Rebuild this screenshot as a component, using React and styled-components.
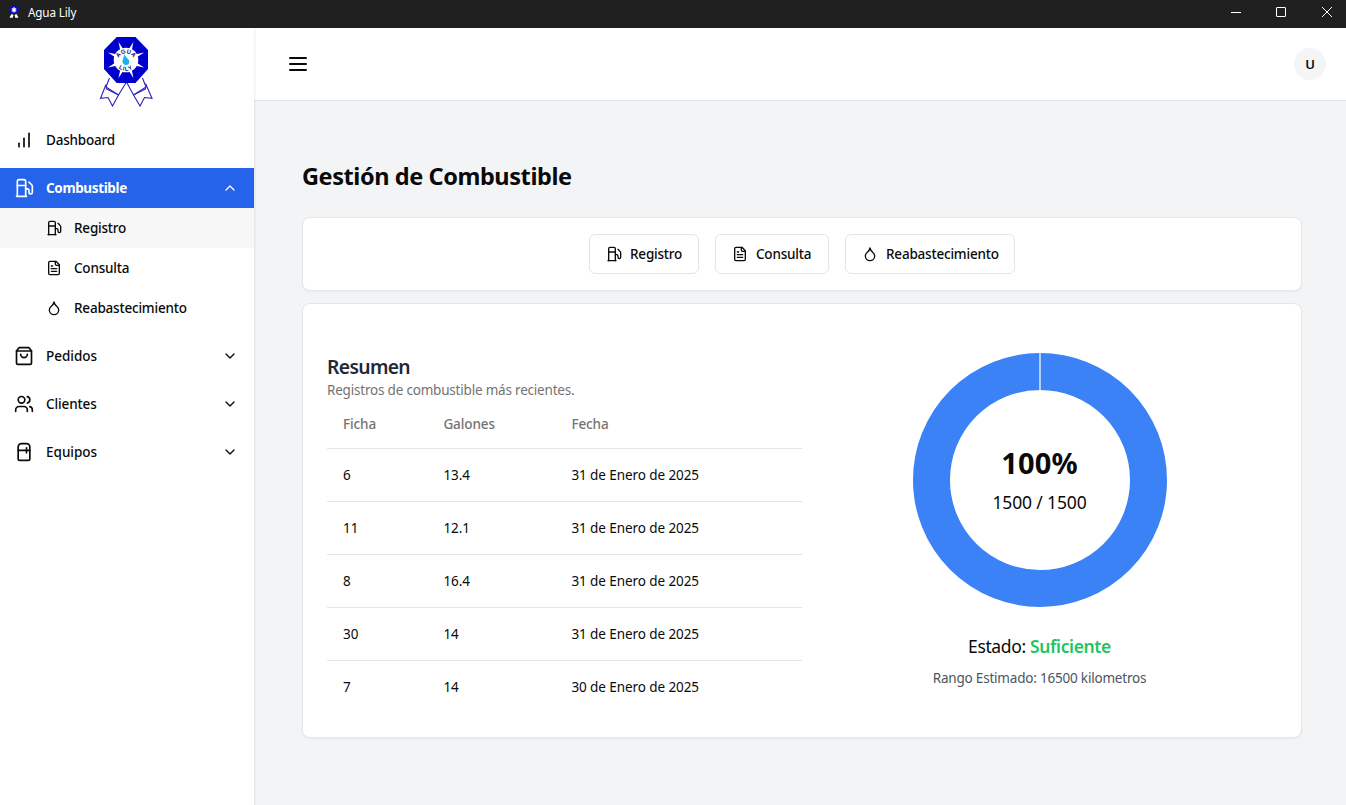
import React from "react";
import styled, { createGlobalStyle, css } from "styled-components";

const Global = createGlobalStyle`
  *, *::before, *::after { box-sizing: border-box; }
  html, body { margin: 0; padding: 0; }
  body {
    font-family: "Segoe UI", "Noto Sans", "Open Sans", sans-serif;
    font-size: 13.5px;
    line-height: 20px;
    color: #0a0a0a;
    background: #f3f4f6;
    overflow: hidden;
  }
  h1, h2, p { margin: 0; }
  button { font: inherit; color: inherit; cursor: pointer; }
`;

const Window = styled.div`
  display: flex;
  flex-direction: column;
  width: 100%;
  height: 100vh;
`;

const TitleBar = styled.header`
  flex: none;
  display: flex;
  align-items: center;
  height: 28px;
  padding-left: 8px;
  background: #202020;
  color: #fff;
`;

const AppName = styled.span`
  margin: -4px auto 0 8px;
  font-size: 11.7px;
  letter-spacing: -0.15px;
`;

const WindowButton = styled.button`
  display: grid;
  place-items: center;
  width: ${(p) => p.$w}px;
  height: 28px;
  padding: 0 0 4px;
  border: 0;
  background: transparent;
  svg { display: block; }
`;

const Body = styled.div`
  flex: 1;
  display: flex;
  min-height: 0;
`;

const Sidebar = styled.aside`
  flex: none;
  width: 254px;
  background: #fff;
  box-shadow: 0 1px 3px rgba(0, 0, 0, 0.14);
  z-index: 1;
`;

const Brand = styled.div`
  display: flex;
  justify-content: center;
  height: 92px;
  padding: 8px 3px 0 0;
`;

const Nav = styled.nav`
  display: flex;
  flex-direction: column;
  gap: 8px;
`;

const NavItem = styled.a`
  display: flex;
  align-items: center;
  height: 40px;
  padding: 0 16px 0 14px;
  gap: 12px;
  font-weight: ${(p) => (p.$active ? 700 : 500)};
  letter-spacing: ${(p) => p.$track || 0}px;
  ${(p) => p.$active && css`
    background: #2563eb;
    color: #fff;
  `}
  svg { flex: none; }
  span { flex: 1; }
`;

const SubItem = styled.a`
  display: flex;
  align-items: center;
  height: 40px;
  padding-left: 46px;
  gap: 12px;
  font-weight: 500;
  letter-spacing: -0.2px;
  background: ${(p) => (p.$current ? "#f7f7f7" : "transparent")};
`;

const Content = styled.div`
  flex: 1;
  display: flex;
  flex-direction: column;
  min-width: 0;
`;

const TopBar = styled.div`
  flex: none;
  display: flex;
  align-items: center;
  justify-content: space-between;
  height: 73px;
  padding: 0 20px 0 32px;
  background: #fff;
  border-bottom: 1px solid #e2e4e8;
`;

const MenuButton = styled.button`
  display: flex;
  padding: 0;
  border: 0;
  background: none;
`;

const Avatar = styled.div`
  display: grid;
  place-items: center;
  width: 32px;
  height: 32px;
  border-radius: 50%;
  background: #f5f5f5;
  font-weight: 600;
  font-size: 13px;
`;

const Main = styled.main`
  flex: 1;
  display: flex;
  flex-direction: column;
  padding: 59px 44px 0 48px;
`;

const PageTitle = styled.h1`
  height: 57px;
  font-size: 23.5px;
  line-height: 32px;
  font-weight: 700;
  letter-spacing: -0.42px;
`;

const Card = styled.section`
  width: 1000px;
  border: 1px solid #e5e7eb;
  border-radius: 8px;
  background: #fff;
  box-shadow: 0 1px 2px rgba(0, 0, 0, 0.05);
`;

const Actions = styled(Card)`
  display: flex;
  align-items: center;
  justify-content: center;
  gap: 16px;
  height: 74px;
  margin-bottom: 12px;
`;

const ActionButton = styled.button`
  display: flex;
  align-items: center;
  gap: 8px;
  width: ${(p) => p.$w}px;
  height: 40px;
  padding: 0 0 0 16px;
  border: 1px solid #e5e5e5;
  border-radius: 6px;
  background: #fff;
  font-weight: 500;
  letter-spacing: -0.2px;
  white-space: nowrap;
`;

const Overview = styled(Card)`
  display: grid;
  grid-template-columns: 1fr 1fr;
  height: 435px;
  padding: 48px 24px 0;
`;

const SummaryTitle = styled.h2`
  padding-top: 1px;
  font-size: 19.3px;
  line-height: 28px;
  font-weight: 600;
  letter-spacing: -0.65px;
  color: #1f2937;
`;

const SummaryNote = styled.p`
  margin-bottom: 2px;
  padding-top: 1px;
  line-height: 16px;
  letter-spacing: -0.2px;
  color: #737373;
`;

const Table = styled.table`
  width: 475px;
  border-collapse: collapse;
  table-layout: fixed;
`;

const HeadCell = styled.th`
  width: ${(p) => p.$w};
  height: 48px;
  padding: 0 16px;
  text-align: left;
  font-weight: 500;
  letter-spacing: -0.1px;
  color: #737373;
  border-bottom: 1px solid #e5e5e5;
`;

const Cell = styled.td`
  height: 53px;
  padding: 0 16px;
  letter-spacing: -0.08px;
  border-bottom: 1px solid #e5e5e5;
  tr:last-child & { border-bottom: 0; }
`;

const Level = styled.div`
  display: flex;
  flex-direction: column;
  align-items: center;
`;

const Gauge = styled.div`
  display: grid;
  place-items: center;
  width: 256px;
  height: 256px;
  > * { grid-area: 1 / 1; }
`;

const GaugeLabel = styled.div`
  display: flex;
  flex-direction: column;
  align-items: center;
  gap: 7px;
`;

const Percent = styled.strong`
  font-size: 29px;
  line-height: 36px;
  font-weight: 700;
  letter-spacing: 0.1px;
`;

const Amount = styled.span`
  font-size: 17.5px;
  line-height: 28px;
  font-weight: 400;
  letter-spacing: -0.15px;
`;

const Status = styled.p`
  margin-top: 24px;
  font-size: 17.5px;
  line-height: 28px;
  letter-spacing: -0.37px;
  b { font-weight: 600; color: #22c55e; }
`;

const Range = styled.p`
  margin-top: 8px;
  letter-spacing: -0.2px;
  color: #4b5563;
`;

const shapes = {
  bars: (
    <>
      <path d="M12 20V10" /><path d="M18 20V4" /><path d="M6 20v-4" />
    </>
  ),
  fuel: (
    <>
      <path d="M3 22h12" /><path d="M4 9h10" />
      <path d="M14 22V4a2 2 0 0 0-2-2H6a2 2 0 0 0-2 2v18" />
      <path d="M14 13h2a2 2 0 0 1 2 2v2a2 2 0 0 0 2 2a2 2 0 0 0 2-2V9.83a2 2 0 0 0-.59-1.42L18 5" />
    </>
  ),
  file: (
    <>
      <path d="M15 2H6a2 2 0 0 0-2 2v16a2 2 0 0 0 2 2h12a2 2 0 0 0 2-2V7Z" />
      <path d="M14 2v4a2 2 0 0 0 2 2h4" /><path d="M10 9H8" /><path d="M16 13H8" /><path d="M16 17H8" />
    </>
  ),
  drop: <path d="M12 22a7 7 0 0 0 7-7c0-2-1-3.9-3-5.5s-3.5-4-4-6.5c-.5 2.5-2 4.9-4 6.5C6 11.1 5 13 5 15a7 7 0 0 0 7 7z" />,
  bag: (
    <>
      <path d="M6 2 3 6v14a2 2 0 0 0 2 2h14a2 2 0 0 0 2-2V6l-3-4Z" />
      <path d="M3 6h18" /><path d="M16 10a4 4 0 0 1-8 0" />
    </>
  ),
  users: (
    <>
      <path d="M16 21v-2a4 4 0 0 0-4-4H6a4 4 0 0 0-4 4v2" /><circle cx="9" cy="7" r="4" />
      <path d="M22 21v-2a4 4 0 0 0-3-3.87" /><path d="M16 3.13a4 4 0 0 1 0 7.75" />
    </>
  ),
  fridge: (
    <>
      <path d="M5 6a4 4 0 0 1 4-4h6a4 4 0 0 1 4 4v14a2 2 0 0 1-2 2H7a2 2 0 0 1-2-2V6Z" />
      <path d="M5 10h14" /><path d="M15 7v6" />
    </>
  ),
  down: <path d="m6 9 6 6 6-6" />,
  up: <path d="m18 15-6-6-6 6" />,
  menu: (
    <>
      <path d="M4 12h16" /><path d="M4 6h16" /><path d="M4 18h16" />
    </>
  ),
};

const Icon = ({ name, size = 20 }) => (
  <svg width={size} height={size} viewBox="0 0 24 24" fill="none" stroke="currentColor"
    strokeWidth="2" strokeLinecap="round" strokeLinejoin="round">
    {shapes[name]}
  </svg>
);

const rays = [22.5, 67.5, 112.5, 157.5, 202.5, 247.5, 292.5, 337.5];

const Logo = () => (
  <svg width="54" height="71" viewBox="0 0 54 71">
    <g fill="#fff" stroke="#2a1fb8" strokeWidth="1.1">
      <path d="M10.5 42 7 51 19.5 59 27.5 46" />
      <path d="M43.5 42 47 51 34.5 59 27.5 46" />
      <path d="M7 48.5 1.5 62.3 9 61.5 13.5 70 19.5 59 7.5 53Z" />
      <path d="M47 48.5 53 62.3 45.5 61.5 41 70 34.5 59 46.5 53Z" />
    </g>
    <path d="M17.7 1H36.5L49 14V33L36.5 47H17.7L5 33V14Z" fill="#0000cd" />
    {rays.map((a) => (
      <path key={a} d="M25.4 13 27 4.5 28.6 13Z" fill="#fff" transform={`rotate(${a} 27 24)`} />
    ))}
    <circle cx="27" cy="24" r="12.3" fill="#fff" />
    <path d="M25.1 17.8c1 3.2 5.6 5.7 5.3 8.3a3.4 3.4 0 0 1-6.7 .2C23.1 23.6 25.3 21.500 25.1 17.8Z" fill="#18b4ee" />
    <defs>
      <path id="arcTop" d="M19.2 25a7.8 7.8 0 0 1 15.6 0" />
      <path id="arcBottom" d="M15.7 23.5a11.3 11.3 0 0 0 22.6 0" />
    </defs>
    <g fill="#10106e" fontSize="5.8" fontWeight="700" fontFamily="Liberation Sans, sans-serif" textAnchor="middle">
      <text letterSpacing="0.3"><textPath href="#arcTop" startOffset="50%">AGUA</textPath></text>
      <text letterSpacing="1"><textPath href="#arcBottom" startOffset="50%">LILY</textPath></text>
    </g>
  </svg>
);

const TitleMark = styled.svg`
  margin-top: -4px;
`;

const SmallLogo = () => (
  <TitleMark width="12" height="14" viewBox="0 0 12 14">
    <path d="M4 0H8L10.5 3V6.5L8.5 9H3.5L1.5 6.5V3Z" fill="#0b0bd0" />
    <path d="M6 2.2V7.5M3.8 3.5 8.2 6.3M8.2 3.5 3.8 6.3" stroke="#fff" strokeWidth="1.3" />
    <path d="M3.5 9 1.5 12.5 4.5 13 5.5 10ZM8.5 9 10.5 12.5 7.5 13 6.5 10Z" fill="#fff" />
  </TitleMark>
);

const Donut = () => (
  <svg width="256" height="256" viewBox="0 0 256 256">
    <circle cx="128" cy="128" r="108.5" fill="none" stroke="#3b82f6" strokeWidth="37" />
    <path d="M128 0V39" stroke="#dbeafe" strokeWidth="1.5" />
  </svg>
);

const rows = [
  ["6", "13.4", "31 de Enero de 2025"],
  ["11", "12.1", "31 de Enero de 2025"],
  ["8", "16.4", "31 de Enero de 2025"],
  ["30", "14", "31 de Enero de 2025"],
  ["7", "14", "30 de Enero de 2025"],
];

export default function App() {
  return (
    <Window>
      <Global />
      <TitleBar>
        <SmallLogo />
        <AppName>Agua Lily</AppName>
        <WindowButton $w={36} aria-label="Minimizar">
          <svg width="10" height="10"><path d="M0 5.5H10" stroke="#fff" /></svg>
        </WindowButton>
        <WindowButton $w={54} aria-label="Maximizar">
          <svg width="10" height="10"><rect x=".5" y=".5" width="9" height="9" rx=".5" fill="none" stroke="#fff" /></svg>
        </WindowButton>
        <WindowButton $w={38} aria-label="Cerrar">
          <svg width="10" height="10"><path d="M0 0 10 10M10 0 0 10" stroke="#fff" /></svg>
        </WindowButton>
      </TitleBar>
      <Body>
        <Sidebar>
          <Brand><Logo /></Brand>
          <Nav>
            <NavItem $track={-0.2}><Icon name="bars" /><span>Dashboard</span></NavItem>
            <div>
              <NavItem $active $track={-0.36}><Icon name="fuel" /><span>Combustible</span><Icon name="up" size={16} /></NavItem>
              <SubItem $current><Icon name="fuel" size={16} />Registro</SubItem>
              <SubItem><Icon name="file" size={16} />Consulta</SubItem>
              <SubItem><Icon name="drop" size={16} />Reabastecimiento</SubItem>
            </div>
            <NavItem><Icon name="bag" /><span>Pedidos</span><Icon name="down" size={16} /></NavItem>
            <NavItem $track={-0.12}><Icon name="users" /><span>Clientes</span><Icon name="down" size={16} /></NavItem>
            <NavItem><Icon name="fridge" /><span>Equipos</span><Icon name="down" size={16} /></NavItem>
          </Nav>
        </Sidebar>
        <Content>
          <TopBar>
            <MenuButton aria-label="Menú"><Icon name="menu" size={24} /></MenuButton>
            <Avatar>U</Avatar>
          </TopBar>
          <Main>
            <PageTitle>Gestión de Combustible</PageTitle>
            <Actions>
              <ActionButton $w={110}><Icon name="fuel" size={16} />Registro</ActionButton>
              <ActionButton $w={114}><Icon name="file" size={16} />Consulta</ActionButton>
              <ActionButton $w={170}><Icon name="drop" size={16} />Reabastecimiento</ActionButton>
            </Actions>
            <Overview>
              <div>
                <SummaryTitle>Resumen</SummaryTitle>
                <SummaryNote>Registros de combustible más recientes.</SummaryNote>
                <Table>
                  <thead>
                    <tr>
                      <HeadCell $w="100.4px">Ficha</HeadCell>
                      <HeadCell $w="128px">Galones</HeadCell>
                      <HeadCell $w="auto">Fecha</HeadCell>
                    </tr>
                  </thead>
                  <tbody>
                    {rows.map((r) => (
                      <tr key={r[0]}>{r.map((c, i) => <Cell key={i}>{c}</Cell>)}</tr>
                    ))}
                  </tbody>
                </Table>
              </div>
              <Level>
                <Gauge>
                  <Donut />
                  <GaugeLabel>
                    <Percent>100%</Percent>
                    <Amount>1500 / 1500</Amount>
                  </GaugeLabel>
                </Gauge>
                <Status>Estado: <b>Suficiente</b></Status>
                <Range>Rango Estimado: 16500 kilometros</Range>
              </Level>
            </Overview>
          </Main>
        </Content>
      </Body>
    </Window>
  );
}
